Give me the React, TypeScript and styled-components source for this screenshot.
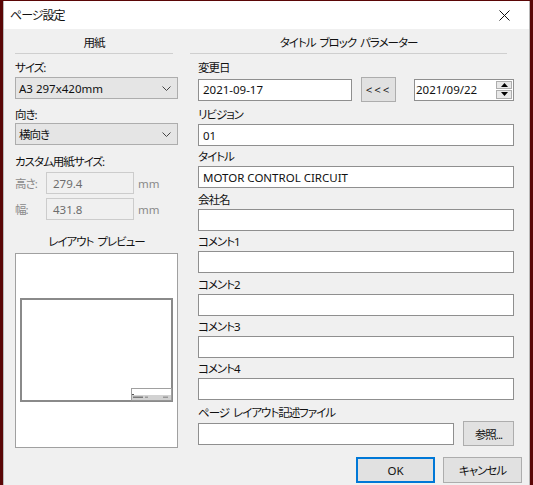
import React from "react";
import styled, { createGlobalStyle } from "styled-components";

const GlobalStyle = createGlobalStyle`
  html, body { margin: 0; padding: 0; }
  body {
    width: 533px;
    height: 485px;
    overflow: hidden;
    background: #5a0606;
    font-family: "Noto Sans", "Noto Sans CJK JP", sans-serif;
    font-size: 11.5px;
    font-feature-settings: "palt";
    letter-spacing: -1px;
    word-spacing: 2px;
    color: #111;
  }
  * { box-sizing: border-box; }
`;

const Screen = styled.div`
  height: 485px;
  padding: 1px 3px 0 3px;
  overflow: hidden;
`;

const Dialog = styled.div`
  width: 527px;
  min-height: 500px;
  background: #f0f0f0;
  border-left: 1px solid #b8b8b8;
  border-right: 1px solid #b8b8b8;
  display: flex;
  flex-direction: column;
`;

const TitleBar = styled.div`
  height: 28px;
  background: #fff;
  display: flex;
  align-items: center;
  justify-content: space-between;
  padding-left: 6px;
`;

const TitleText = styled.span`
  font-size: 12px;
`;

const CloseBox = styled.div`
  width: 50px;
  height: 28px;
  display: flex;
  align-items: center;
  justify-content: center;
`;

const Body = styled.div`
  padding: 6px 15px 0 11px;
  display: flex;
  flex-direction: column;
`;

const HeaderRow = styled.div`
  display: grid;
  grid-template-columns: 158px 317px;
  column-gap: 17px;
`;

const SectionHeader = styled.div`
  text-align: center;
  line-height: 16px;
  padding-bottom: 2px;
  border-bottom: 1px solid #cfcfcf;
`;

const Columns = styled.div`
  display: grid;
  grid-template-columns: 163px 316px;
  column-gap: 20px;
  margin-top: 6px;
`;

const Column = styled.div`
  display: flex;
  flex-direction: column;
`;

const Label = styled.div<{ $mt?: number; $center?: boolean }>`
  line-height: 16px;
  height: 16px;
  white-space: nowrap;
  margin-top: ${(p) => p.$mt ?? 0}px;
  text-align: ${(p) => (p.$center ? "center" : "left")};
`;

const Select = styled.div<{ $mt?: number; $latin?: boolean }>`
  height: 22px;
  margin-top: ${(p) => p.$mt ?? 1}px;
  background: #e5e5e5;
  border: 1px solid #adadad;
  display: flex;
  align-items: center;
  justify-content: space-between;
  padding: 0 6px 0 3px;
  letter-spacing: ${(p) => (p.$latin ? "0" : "-1px")};
  word-spacing: 0;
`;

const DimRow = styled.div<{ $mt: number }>`
  display: flex;
  align-items: center;
  margin-top: ${(p) => p.$mt}px;
`;

const DimLabel = styled.span`
  width: 31px;
  color: #8a8a8a;
`;

const DimInput = styled.div`
  width: 88px;
  height: 22px;
  border: 1px solid #cccccc;
  background: #f0f0f0;
  color: #6d6d6d;
  display: flex;
  align-items: center;
  padding-left: 6px;
  letter-spacing: 0;
`;

const Unit = styled.span`
  margin-left: 4px;
  color: #8a8a8a;
  letter-spacing: 0;
`;

const Preview = styled.div`
  margin-top: 3px;
  height: 195px;
  background: #fff;
  border: 1px solid #a0a0a0;
  display: flex;
`;

const TextBox = styled.div<{ $mt?: number; $w?: number }>`
  height: 22px;
  margin-top: ${(p) => p.$mt ?? 1}px;
  width: ${(p) => (p.$w ? `${p.$w}px` : "100%")};
  flex: none;
  background: #fff;
  border: 1px solid #8f8f8f;
  display: flex;
  align-items: center;
  padding-left: 4px;
  white-space: nowrap;
  letter-spacing: 0;
  word-spacing: 0;
`;

const Row = styled.div<{ $mt?: number }>`
  display: flex;
  align-items: center;
  margin-top: ${(p) => p.$mt ?? 0}px;
`;

const Button = styled.div<{ $w: number; $h: number; $ml?: number; $default?: boolean; $ls?: number }>`
  width: ${(p) => p.$w}px;
  height: ${(p) => p.$h}px;
  margin-left: ${(p) => p.$ml ?? 0}px;
  flex: none;
  background: #e1e1e1;
  border: 1px solid ${(p) => (p.$default ? "#0078d7" : "#adadad")};
  box-shadow: ${(p) => (p.$default ? "inset 0 0 0 1px #0078d7" : "none")};
  display: flex;
  align-items: center;
  justify-content: center;
  letter-spacing: ${(p) => p.$ls ?? -1}px;
`;

const DateBox = styled.div`
  width: 100px;
  height: 22px;
  margin-left: 18px;
  flex: none;
  background: #fff;
  border: 1px solid #8f8f8f;
  display: flex;
  align-items: center;
  justify-content: space-between;
  padding: 0 1px 0 1px;
  letter-spacing: 0;
`;

const Spinner = styled.div`
  width: 16px;
  height: 18px;
  display: flex;
  flex-direction: column;
  gap: 1px;
`;

const SpinButton = styled.div`
  flex: 1;
  background: #e8e8e8;
  border: 1px solid #adadad;
  display: flex;
  align-items: center;
  justify-content: center;
`;

const Footer = styled.div`
  display: flex;
  justify-content: flex-end;
  gap: 8px;
  margin-right: -8px;
  margin-top: 9px;
`;

const Chevron = () => (
  <svg width="9" height="5" viewBox="0 0 9 5">
    <polyline points="0.5,0.5 4.5,4.5 8.5,0.5" fill="none" stroke="#444" strokeWidth="1" />
  </svg>
);

const CloseIcon = () => (
  <svg width="11" height="11" viewBox="0 0 11 11">
    <line x1="0.5" y1="0.5" x2="10.5" y2="10.5" stroke="#111" strokeWidth="1" />
    <line x1="10.5" y1="0.5" x2="0.5" y2="10.5" stroke="#111" strokeWidth="1" />
  </svg>
);

const Tri = ({ up }: { up: boolean }) => (
  <svg width="7" height="4" viewBox="0 0 7 4">
    <polygon points={up ? "0,4 7,4 3.5,0" : "0,0 7,0 3.5,4"} fill="#000" />
  </svg>
);

const PreviewDrawing = () => (
  <svg width="161" height="193" viewBox="0 0 161 193">
    <rect x="5" y="45" width="151" height="102" fill="#fff" stroke="#8a8a8a" strokeWidth="2" />
    <rect x="115.5" y="134.5" width="40" height="11.5" fill="#fff" stroke="#a0a0a0" strokeWidth="1" />
    <rect x="116" y="141" width="39" height="5" fill="#d2d2d2" />
    <line x1="116" y1="140.5" x2="118" y2="140.5" stroke="#555" strokeWidth="1" />
    <rect x="117" y="142.5" width="10" height="1.5" fill="#7a7a7a" />
    <rect x="129" y="142.5" width="3" height="1.5" fill="#9a9a9a" />
    <rect x="147" y="142.5" width="5" height="1.5" fill="#9a9a9a" />
  </svg>
);

const fields = ["会社名", "コメント1", "コメント2", "コメント3", "コメント4"];

export default function App() {
  return (
    <>
      <GlobalStyle />
      <Screen>
        <Dialog>
          <TitleBar>
            <TitleText>ページ設定</TitleText>
            <CloseBox>
              <CloseIcon />
            </CloseBox>
          </TitleBar>
          <Body>
            <HeaderRow>
              <SectionHeader>用紙</SectionHeader>
              <SectionHeader>タイトル ブロック パラメーター</SectionHeader>
            </HeaderRow>
            <Columns>
              <Column>
                <Label>サイズ:</Label>
                <Select $latin>
                  <span>A3 297x420mm</span>
                  <Chevron />
                </Select>
                <Label $mt={8}>向き:</Label>
                <Select $mt={0}>
                  <span>横向き</span>
                  <Chevron />
                </Select>
                <Label $mt={9}>カスタム用紙サイズ:</Label>
                <DimRow $mt={2}>
                  <DimLabel>高さ:</DimLabel>
                  <DimInput>279.4</DimInput>
                  <Unit>mm</Unit>
                </DimRow>
                <DimRow $mt={4}>
                  <DimLabel>幅:</DimLabel>
                  <DimInput>431.8</DimInput>
                  <Unit>mm</Unit>
                </DimRow>
                <Label $mt={14} $center>
                  レイアウト プレビュー
                </Label>
                <Preview>
                  <PreviewDrawing />
                </Preview>
              </Column>
              <Column>
                <Label>変更日</Label>
                <Row $mt={1}>
                  <TextBox $w={154} $mt={0}>
                    2021-09-17
                  </TextBox>
                  <Button $w={35} $h={25} $ml={9} $ls={2}>
                    &lt;&lt;&lt;
                  </Button>
                  <DateBox>
                    <span>2021/09/22</span>
                    <Spinner>
                      <SpinButton>
                        <Tri up />
                      </SpinButton>
                      <SpinButton>
                        <Tri up={false} />
                      </SpinButton>
                    </Spinner>
                  </DateBox>
                </Row>
                <Label $mt={5}>リビジョン</Label>
                <TextBox>01</TextBox>
                <Label $mt={3.4}>タイトル</Label>
                <TextBox>MOTOR CONTROL CIRCUIT</TextBox>
                {fields.map((f) => (
                  <React.Fragment key={f}>
                    <Label $mt={3.4}>{f}</Label>
                    <TextBox />
                  </React.Fragment>
                ))}
                <Label $mt={5}>ページ レイアウト記述ファイル</Label>
                <Row $mt={0}>
                  <TextBox $w={256} $mt={0} />
                  <Button $w={51} $h={25} $ml={9}>
                    参照...
                  </Button>
                </Row>
              </Column>
            </Columns>
            <Footer>
              <Button $w={79} $h={26} $default $ls={0}>
                OK
              </Button>
              <Button $w={79} $h={26}>
                キャンセル
              </Button>
            </Footer>
          </Body>
        </Dialog>
      </Screen>
    </>
  );
}
